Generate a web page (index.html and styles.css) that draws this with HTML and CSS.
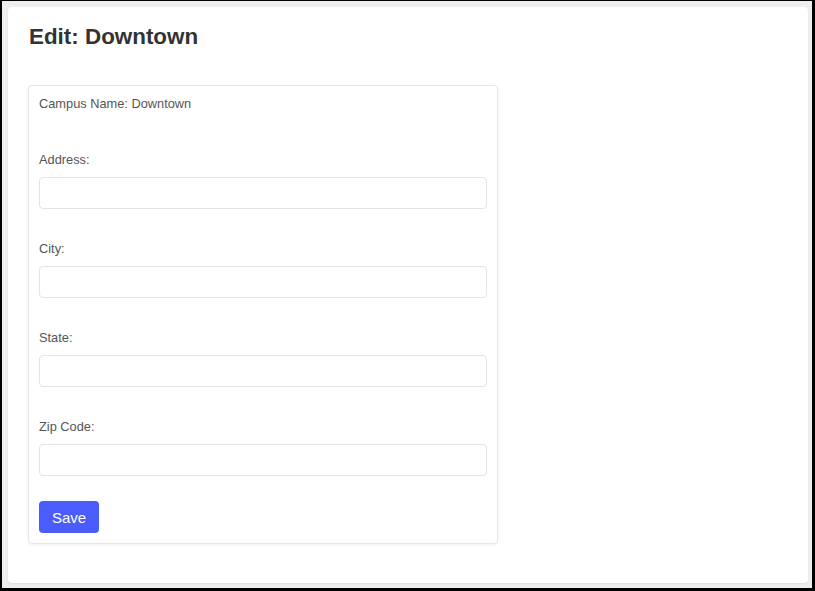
FILE: index.html
```html
<!DOCTYPE html>
<html lang="en">
<head>
<meta charset="utf-8">
<title>Edit: Downtown</title>
<link rel="stylesheet" href="styles.css">
</head>
<body>
<div class="window">
  <main class="page">
    <h1 class="title">Edit: Downtown</h1>
    <form class="form-card">
      <p class="campus">Campus Name: Downtown</p>
      <div class="field">
        <label class="label" for="address">Address:</label>
        <input class="input" id="address" type="text">
      </div>
      <div class="field">
        <label class="label" for="city">City:</label>
        <input class="input" id="city" type="text">
      </div>
      <div class="field">
        <label class="label" for="state">State:</label>
        <input class="input" id="state" type="text">
      </div>
      <div class="field">
        <label class="label" for="zip">Zip Code:</label>
        <input class="input" id="zip" type="text">
      </div>
      <button class="save" type="button">Save</button>
    </form>
  </main>
</div>
</body>
</html>
```

FILE: styles.css
```css
html, body {
  margin: 0;
  padding: 0;
  background: #000;
}

body {
  font-family: "Liberation Sans", Arial, sans-serif;
  padding: 1px 3px 3px 2px;
  width: 815px;
  height: 591px;
  box-sizing: border-box;
}

.window {
  background: #efeff1;
  height: 100%;
  box-sizing: border-box;
  padding: 6px 4px 5px 6px;
}

.page {
  background: #fff;
  border-radius: 4px;
  box-shadow: 0 1px 2px rgba(0, 0, 0, 0.08);
  width: 800px;
  height: 576px;
  box-sizing: border-box;
  padding: 17px 20px 20px 21px;
}

.title {
  margin: 0 0 35px 0;
  font-size: 22.4px;
  font-weight: bold;
  color: #333;
  line-height: 26px;
}

.form-card {
  width: 470px;
  margin-left: -1px;
  box-sizing: border-box;
  border: 1px solid #e6e6e6;
  border-radius: 4px;
  box-shadow: 0 1px 3px rgba(0, 0, 0, 0.07);
  padding: 10px;
  display: flex;
  flex-direction: column;
  align-items: flex-start;
}

.campus {
  margin: 0 0 9px 0;
  font-size: 12.8px;
  line-height: 15px;
  color: #555;
}

.field {
  display: flex;
  flex-direction: column;
  gap: 9px;
  width: 100%;
  margin-top: 32px;
}

.label {
  font-size: 12.8px;
  line-height: 16px;
  color: #555;
}

.input {
  width: 100%;
  height: 32px;
  box-sizing: border-box;
  border: 1px solid #e4e4e4;
  border-radius: 4px;
  background: #fff;
  margin: 0;
  padding: 0 8px;
  font-family: inherit;
}

.save {
  margin-top: 25px;
  width: 60px;
  height: 32px;
  border: none;
  border-radius: 4px;
  background: #4a5cfc;
  color: #fff;
  font-family: inherit;
  font-size: 15px;
  padding: 0;
}
```
